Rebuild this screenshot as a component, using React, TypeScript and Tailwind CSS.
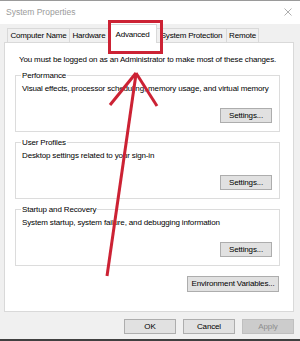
import React from "react";

const tabs = [
  { label: "Computer Name", w: "w-[63px]" },
  { label: "Hardware", w: "w-[40px]" },
  { label: "Advanced", w: "w-[49px]", active: true },
  { label: "System Protection", w: "w-[71px]" },
  { label: "Remote", w: "w-[33px]" },
];

const groups = [
  { title: "Performance", text: "Visual effects, processor scheduling, memory usage, and virtual memory" },
  { title: "User Profiles", text: "Desktop settings related to your sign-in" },
  { title: "Startup and Recovery", text: "System startup, system failure, and debugging information" },
];

function Btn({ children, className = "", disabled = false }: { children: React.ReactNode; className?: string; disabled?: boolean }) {
  return (
    <button
      className={
        "flex items-center justify-center border text-[8px] tracking-[-0.15px] leading-none " +
        (disabled ? "bg-[#cccccc] border-[#bfbfbf] text-[#8d8d8d] " : "bg-[#e1e1e1] border-[#adadad] text-black ") +
        className
      }
    >
      {children}
    </button>
  );
}

export default function App() {
  return (
    <div className="relative w-[300px] h-[341px] overflow-hidden bg-[#f0f0f0] border-t border-[#9a9a9a] border-b-2 border-b-[#404040] flex flex-col font-['Liberation_Sans',Arial,sans-serif] text-black">
      {/* title bar */}
      <div className="h-[23px] shrink-0 bg-white flex items-center justify-between pl-[6px] pr-[8px]">
        <span className="text-[8.5px] text-[#9b9b9b]">System Properties</span>
        <svg width="8" height="8" viewBox="0 0 8 8" className="mt-[-2px]">
          <path d="M0.5 0.5 L7.5 7.5 M7.5 0.5 L0.5 7.5" stroke="#9a9a9a" strokeWidth="0.8" fill="none" />
        </svg>
      </div>

      {/* tabs */}
      <div className="relative z-10 -mb-px flex h-[19px] shrink-0 items-end pl-[7px] text-[8px] tracking-[-0.2px]">
        {tabs.map((t) =>
          t.active ? (
            <div key={t.label} className={"-ml-px flex h-[19px] items-center justify-center border border-b-0 border-[#d9d9d9] bg-white pt-[1px] " + t.w}>
              {t.label}
            </div>
          ) : (
            <div key={t.label} className={"-ml-px first:ml-0 mb-px flex h-[14px] items-center justify-center border border-b-0 border-[#d9d9d9] bg-[#f0f0f0] " + t.w}>
              {t.label}
            </div>
          )
        )}
      </div>

      {/* panel */}
      <div className="ml-[4px] mr-[6px] h-[270px] shrink-0 border border-[#d9d9d9] bg-white pt-[11px] pl-[10px] pr-[13px] flex flex-col text-[8px] tracking-[-0.15px] leading-[11px]">
        <p className="ml-[4px] whitespace-nowrap">You must be logged on as an Administrator to make most of these changes.</p>
        {groups.map((g) => (
          <fieldset key={g.title} className="mt-[5px] flex flex-col border border-[#dcdcdc] px-[6px] pb-[8px]">
            <legend className="ml-[-1px] px-[1px]">{g.title}</legend>
            <p className="mt-[2px] whitespace-nowrap">{g.text}</p>
            <Btn className="mt-[14px] mr-[1px] h-[15px] w-[52px] self-end">Settings...</Btn>
          </fieldset>
        ))}
        <Btn className="mt-[10px] h-[16px] w-[92px] self-end mr-px">Environment Variables...</Btn>
      </div>

      {/* footer buttons */}
      <div className="mt-[7px] flex justify-end gap-[7px] pr-[6px]">
        <Btn className="h-[15px] w-[52px]">OK</Btn>
        <Btn className="h-[15px] w-[52px]">Cancel</Btn>
        <Btn className="h-[15px] w-[52px]" disabled>Apply</Btn>
      </div>

      {/* red annotation */}
      <div className="absolute left-[108px] top-[19px] z-20 h-[34px] w-[55px] border-[3px] border-[#cc2234]" />
      <svg className="pointer-events-none absolute inset-0 z-20" width="300" height="341" viewBox="0 0 300 341">
        <g stroke="#cc2234" strokeWidth="3" strokeLinecap="butt" fill="none">
          <line x1="107" y1="275" x2="136" y2="73" />
          <line x1="136" y1="72" x2="110" y2="104" />
          <line x1="136" y1="72" x2="157" y2="105" />
        </g>
      </svg>
    </div>
  );
}
